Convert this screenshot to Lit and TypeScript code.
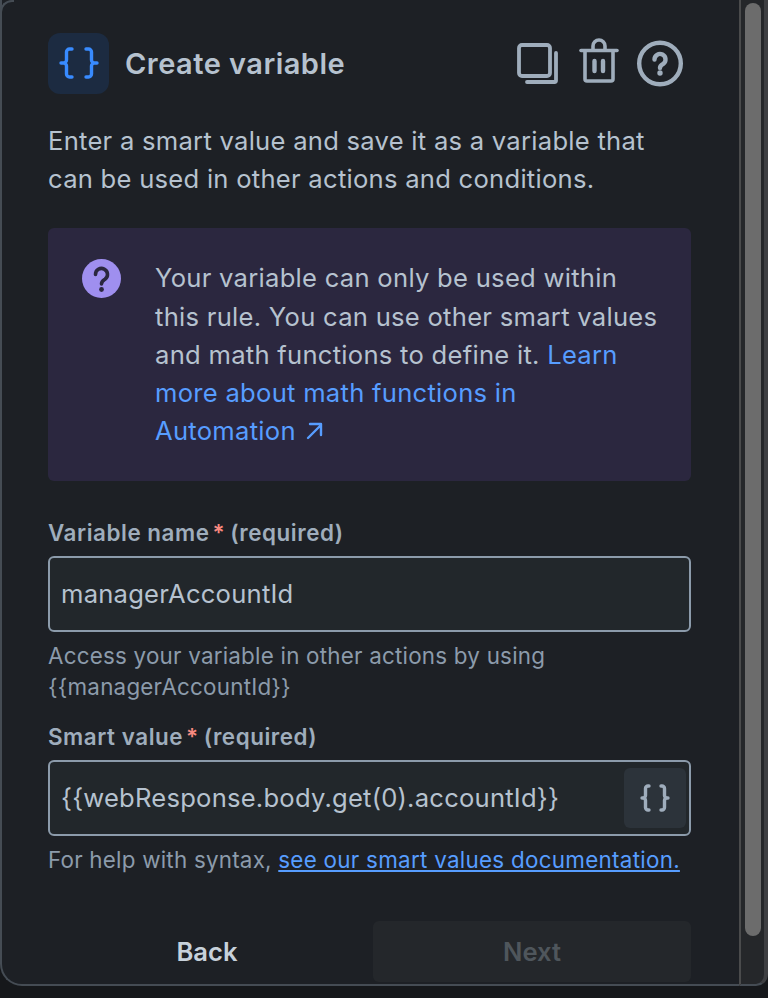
import { LitElement, html, css } from "lit";
import { customElement } from "lit/decorators.js";

@customElement("app-root")
export class AppRoot extends LitElement {
  static styles = css`
    :host { display: block; width: 768px; height: 998px; background: #16181b; font-family: Inter, "Liberation Sans", sans-serif; font-optical-sizing: none; font-variation-settings: "opsz" 14; overflow: hidden; }
    * { box-sizing: border-box; }
    .frame { display: flex; height: 986px; }
    .panel { width: 739px; height: 986px; padding: 32px 46px 0 46px; background: #1d2025; border: 2px solid #454c54; border-top: none; border-right: none; border-radius: 0 0 0 22px; position: relative; }
    .panel::before { content: ""; position: absolute; left: -2px; top: 0; width: 12px; height: 12px; border-top: 2px solid #454c54; border-left: 2px solid #454c54; border-radius: 12px 0 0 0; background: #1d2025; }
    .gutter { width: 29px; height: 986px; background: #25272a; border-left: 2px solid #4a4b4c; border-bottom: 2px solid #454c54; border-right: 4px solid #3e3f42; padding: 3px 0 0 4px; border-radius: 0 0 12px 0; }
    .thumb { width: 16px; height: 933px; background: #6c6c6c; border-radius: 8px; }
    .head { display: flex; align-items: center; height: 62px; }
    .logo { width: 61px; height: 61px; border-radius: 12px; background: #1c2b41; display: flex; align-items: center; justify-content: center; flex: none; }
    h1 { margin: 0 0 0 16px; font-size: 29px; font-weight: 600; letter-spacing: 0.47px; color: #b6c2cf; flex: 1; }
    .tools { display: flex; align-items: center; margin-right: 10px; }
    .tools svg { display: block; flex: none; }
    .copy { margin-right: 21px; }
    .trash { margin-right: 18px; margin-top: -5px; }
    .intro { margin: 28px 0 0; font-size: 25.6px; line-height: 38.2px; letter-spacing: 0.26px; color: #b6c2cf; width: 640px; }
    .note { margin-top: 30px; width: 643px; height: 253px; border-radius: 6px; background: #2b273f; display: flex; padding: 31px 0 0 34px; }
    .note svg.q { flex: none; }
    .note p { margin: 0 0 0 34px; font-size: 25.6px; line-height: 38.2px; letter-spacing: 0.27px; color: #b6c2cf; width: 504px; }
    a { color: #579dff; text-decoration: none; }
    label { display: block; font-size: 22.4px; font-weight: 600; letter-spacing: 0.55px; color: #9fadbc; line-height: 28px; }
    label b { color: #f88a80; font-weight: 600; margin-left: 3px; margin-right: 5px; }
    .l1 { margin-top: 38px; }
    .l2 { margin-top: 21px; }
    .field { margin-top: 9px; width: 643px; height: 76px; border: 2px solid #8c9bab; border-radius: 6px; background: #22272b; display: flex; align-items: center; padding: 0 3px 0 11px; font-size: 25.6px; letter-spacing: 0.22px; color: #b6c2cf; }
    .field span { flex: 1; margin-top: -1px; }
    .brace { width: 62px; height: 60px; background: #2c333a; border-radius: 6px; display: flex; align-items: center; justify-content: center; }
    .help { margin-top: 8px; font-size: 22.4px; line-height: 31px; letter-spacing: 0.22px; color: #8c9bab; }
    .help a { text-decoration: underline; letter-spacing: 0.28px; }
    .foot { margin-top: 46px; display: flex; width: 643px; height: 61px; }
    .back { width: 318px; display: flex; align-items: center; justify-content: center; font-size: 25.6px; font-weight: 600; color: #c7d1db; }
    .next { margin-left: 7px; width: 318px; border-radius: 6px; background: #24272b; display: flex; align-items: center; justify-content: center; font-size: 25.6px; font-weight: 600; color: #4f565c; }
  `;

  render() {
    return html`
      <div class="frame">
        <div class="panel">
          <div class="head">
            <div class="logo">
              <svg width="42" height="32" viewBox="0 0 42 32" fill="none" stroke="#388bff" stroke-width="3.4" stroke-linecap="round" stroke-linejoin="round">
                <path d="M14 2h-2.5a3 3 0 0 0-3 3v8a3 3 0 0 1-3 3H3h2.5a3 3 0 0 1 3 3v8a3 3 0 0 0 3 3H14" />
                <path d="M28 2h2.5a3 3 0 0 1 3 3v8a3 3 0 0 0 3 3H39h-2.5a3 3 0 0 0-3 3v8a3 3 0 0 1-3 3H28" />
              </svg>
            </div>
            <h1>Create variable</h1>
            <div class="tools">
              <svg class="copy" width="41" height="41" viewBox="0 0 41 41" fill="none" stroke="#9fadbc" stroke-width="3.8" stroke-linecap="round" stroke-linejoin="round">
                <rect x="2" y="2" width="31" height="31" rx="3" />
                <path d="M39 10v27.5a1.5 1.5 0 0 1-1.5 1.5H10" />
              </svg>
              <svg class="trash" width="40" height="46" viewBox="0 0 40 46" fill="none" stroke="#9fadbc" stroke-width="3.6" stroke-linecap="round" stroke-linejoin="round">
                <path d="M2 12.5h36" />
                <path d="M14 12V8a6 6 0 0 1 12 0v4" />
                <path d="M6 13v28a2 2 0 0 0 2 2h24a2 2 0 0 0 2-2V13" />
                <path d="M15.5 23v10M24 23v10" stroke-width="4.4" />
              </svg>
              <svg width="46" height="47" viewBox="0 0 46 47" fill="none" stroke="#9fadbc" stroke-width="4.4" stroke-linecap="round" stroke-linejoin="round">
                <circle cx="23" cy="23.5" r="20.8" />
                <path d="M17.5 19.5a5.5 5.5 0 1 1 8.7 4.4c-2 1.3-3.2 1.9-3.2 4" />
                <circle cx="23" cy="33" r="1.4" fill="#9fadbc" stroke-width="2.6" />
              </svg>
            </div>
          </div>
          <p class="intro">Enter a smart value and save it as a variable that can be used in other actions and conditions.</p>
          <div class="note">
            <svg class="q" width="39" height="39" viewBox="0 0 39 39">
              <circle cx="19.5" cy="19.5" r="19.5" fill="#9f8fef" />
              <path d="M13.5 15.5a6 6 0 1 1 9.5 4.8c-2.2 1.5-3.5 2.2-3.5 4.7" fill="none" stroke="#2b273f" stroke-width="3.6" stroke-linecap="round" />
              <circle cx="19.5" cy="30.5" r="2.4" fill="#2b273f" />
            </svg>
            <p>Your variable can only be used within this rule. You can use other smart values and math functions to define it. <a href="#">Learn more about math functions in Automation <svg width="18" height="18" viewBox="0 0 18 18" fill="none" stroke="#579dff" stroke-width="2.4" stroke-linecap="round" stroke-linejoin="round" style="margin-left:2px"><path d="M3 16L16 3M5 2h11v11" /></svg></a></p>
          </div>
          <label class="l1">Variable name<b>*</b>(required)</label>
          <div class="field"><span>managerAccountId</span></div>
          <div class="help">Access your variable in other actions by using<br />{{managerAccountId}}</div>
          <label class="l2">Smart value<b>*</b>(required)</label>
          <div class="field">
            <span>{{webResponse.body.get(0).accountId}}</span>
            <div class="brace">
              <svg width="32" height="28" viewBox="0 0 32 28" fill="none" stroke="#9fadbc" stroke-width="3.4" stroke-linecap="round" stroke-linejoin="round">
                <path d="M10 2H9a2.5 2.5 0 0 0-2.5 2.5v7A2.5 2.5 0 0 1 4 14h-1h1a2.5 2.5 0 0 1 2.5 2.5v7A2.5 2.5 0 0 0 9 26h1" />
                <path d="M22 2h1a2.5 2.5 0 0 1 2.5 2.5v7A2.5 2.5 0 0 0 28 14h1h-1a2.5 2.5 0 0 0-2.5 2.5v7A2.5 2.5 0 0 1 23 26h-1" />
              </svg>
            </div>
          </div>
          <div class="help">For help with syntax, <a href="#">see our smart values documentation.</a></div>
          <div class="foot">
            <div class="back">Back</div>
            <div class="next">Next</div>
          </div>
        </div>
        <div class="gutter"><div class="thumb"></div></div>
      </div>
    `;
  }
}
